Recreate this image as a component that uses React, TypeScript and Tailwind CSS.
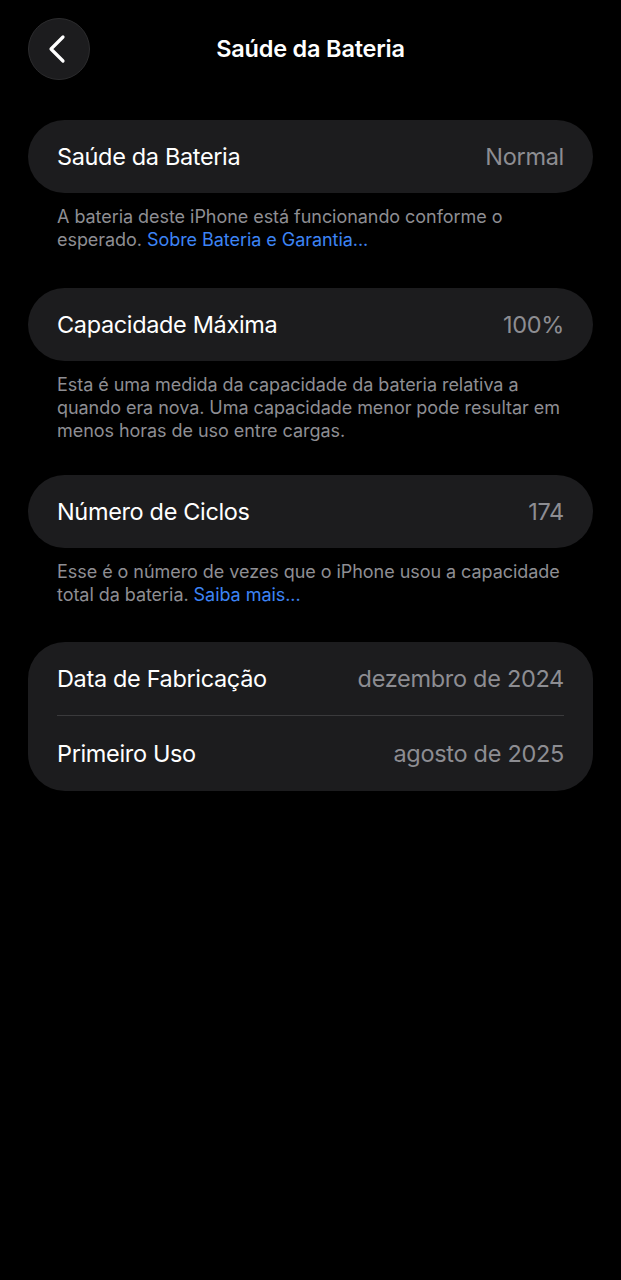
import React from "react";

const font = { fontFamily: "Inter, 'Noto Sans', sans-serif" };

function Card({ label, value }: { label: string; value: string }) {
  return (
    <div className="mx-[28px] h-[73px] rounded-[37px] bg-[#1c1c1e] flex items-center justify-between px-[29px]">
      <span className="text-[23.5px] text-white tracking-[-0.35px]">{label}</span>
      <span className="text-[23.5px] text-[#8d8d92] tracking-[-0.3px]">{value}</span>
    </div>
  );
}

function Footer({ children }: { children: React.ReactNode }) {
  return (
    <p className="ml-[57px] mr-[20px] mt-[12px] text-[18px] leading-[23px] text-[#8e8e93] tracking-[-0.05px] whitespace-nowrap">
      {children}
    </p>
  );
}

export default function App() {
  return (
    <div className="w-[621px] min-h-[1280px] bg-black" style={font}>
      <div className="relative h-[98px] flex items-center justify-center">
        <button className="absolute left-[28px] top-[18px] w-[62px] h-[62px] rounded-full bg-[#1c1c1e] border border-[#2c2c2e] flex items-center justify-center">
          <svg width="20" height="30" viewBox="0 0 20 30" fill="none" className="-ml-[4px]">
            <path d="M16 3 L4 15 L16 27" stroke="white" strokeWidth="3.2" strokeLinecap="round" strokeLinejoin="round" />
          </svg>
        </button>
        <h1 className="text-[23.5px] font-semibold text-white tracking-[-0.2px]">Saúde da Bateria</h1>
      </div>

      <div className="mt-[22px]">
        <Card label="Saúde da Bateria" value="Normal" />
        <Footer>
          A bateria deste iPhone está funcionando conforme o
          <br />
          esperado. <span className="text-[#3d84f5]">Sobre Bateria e Garantia...</span>
        </Footer>
      </div>

      <div className="mt-[37px]">
        <Card label="Capacidade Máxima" value="100%" />
        <Footer>
          Esta é uma medida da capacidade da bateria relativa a
          <br />
          quando era nova. Uma capacidade menor pode resultar em
          <br />
          menos horas de uso entre cargas.
        </Footer>
      </div>

      <div className="mt-[33px]">
        <Card label="Número de Ciclos" value="174" />
        <Footer>
          Esse é o número de vezes que o iPhone usou a capacidade
          <br />
          total da bateria. <span className="text-[#3d84f5]">Saiba mais...</span>
        </Footer>
      </div>

      <div className="mt-[36px] mx-[28px] rounded-[37px] bg-[#1c1c1e] px-[29px]">
        <div className="h-[74px] flex items-center justify-between border-b border-[#3a3a3c]">
          <span className="text-[23.5px] text-white tracking-[-0.35px]">Data de Fabricação</span>
          <span className="text-[23.5px] text-[#8d8d92] tracking-[-0.3px]">dezembro de 2024</span>
        </div>
        <div className="h-[75px] flex items-center justify-between">
          <span className="text-[23.5px] text-white tracking-[-0.35px]">Primeiro Uso</span>
          <span className="text-[23.5px] text-[#8d8d92] tracking-[-0.3px]">agosto de 2025</span>
        </div>
      </div>
    </div>
  );
}
